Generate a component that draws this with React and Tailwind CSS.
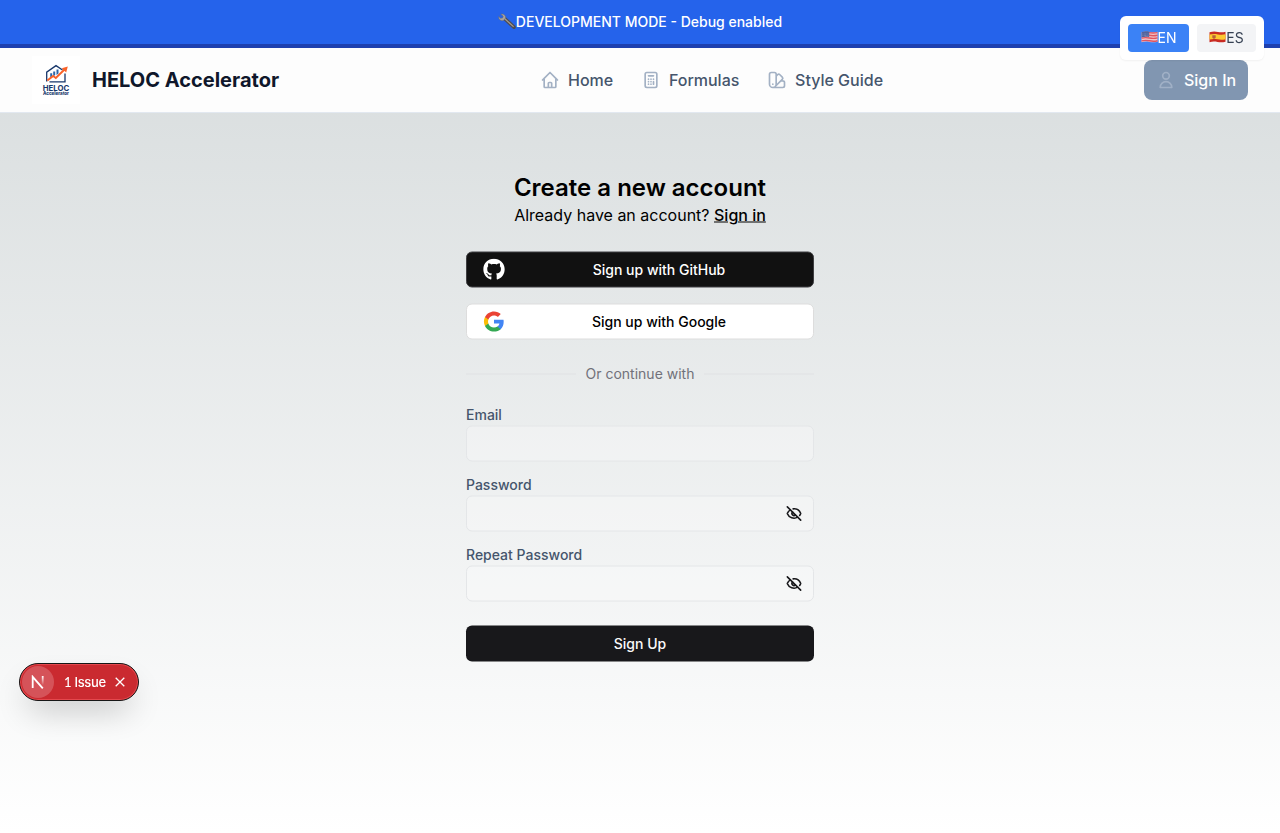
import { EyeOff } from "lucide-react";
import { HiOutlineHome, HiOutlineCalculator, HiOutlineColorSwatch, HiOutlineUser } from "react-icons/hi";
import { FaGithub } from "react-icons/fa";

function Wrench() {
  return (
    <svg viewBox="0 0 18 18" className="h-[18px] w-[18px] shrink-0">
      <path d="M6.5 5.5 16 14.2" stroke="#4e4d52" strokeWidth="3.6" strokeLinecap="round" />
      <path d="M6 5 15.2 13.4" stroke="#a59c94" strokeWidth="1.2" strokeLinecap="round" />
      <path d="M2.9 1.2 5.2 3.2 4.6 5 2.6 5.3.7 3.5C.4 6.5 2.8 8.3 5.3 7.4L7.6 5.2C8 2.5 5.6.5 2.9 1.2Z" fill="#a9a49f" stroke="#69686d" strokeWidth=".5" />
    </svg>
  );
}

function UsFlag() {
  return (
    <svg viewBox="0 0 17 12" className="mb-0.5 h-3 w-[17px] shrink-0">
      <path d="M.5 1.2C4 .2 6 .2 9 .9s5 .5 7.5-.2V10.7c-3 .8-5 .8-8 .2s-5-.6-8 .3Z" fill="#f3c6c9" />
      <path d="M8 1.6c3 .7 5.5.6 8.5 0M8 4.3c3 .6 5.5.6 8.5-.1M.5 7.1c3-.8 5-.7 8-.1s5 .6 8-.1M.5 9.9c3-.8 5-.8 8-.1s5 .7 8-.1" fill="none" stroke="#e05560" strokeWidth="1.4" />
      <path d="M.5 1.2C4 .2 5.5.2 8.2.7V6C5.5 5.6 4 5.6.5 6.4Z" fill="#51639c" />
      <path d="M1.5 3h6M1.5 4.6h6" stroke="#a9b6d8" strokeWidth=".5" strokeDasharray=".7 .7" />
    </svg>
  );
}

function EsFlag() {
  return (
    <svg viewBox="0 0 17 12" className="mb-0.5 h-3 w-[17px] shrink-0">
      <path d="M.5 1.2C4 .2 6 .2 9 .9s5 .5 7.5-.2V10.7c-3 .8-5 .8-8 .2s-5-.6-8 .3Z" fill="#c92b22" />
      <path d="M.5 3.6c3.5-.9 5.5-.8 8.5-.2s5 .5 7.5-.1V8.2c-3 .7-5 .7-8 .1s-5-.6-8 .3Z" fill="#fcc931" />
      <path d="M3.300 4.200h3.400v2.600L5 8 3.300 6.800Z" fill="#b9603b" />
    </svg>
  );
}

function GoogleMark() {
  return (
    <svg viewBox="0 0 24 24" className="h-[22px] w-[22px]">
      <path fill="#4285F4" d="M22.560 12.250c0-.78-.07-1.530-.2-2.250H12v4.260h5.920c-.26 1.370-1.040 2.530-2.210 3.310v2.770h3.570c2.080-1.920 3.280-4.740 3.280-8.090z" />
      <path fill="#34A853" d="M12 23c2.970 0 5.460-.98 7.280-2.660l-3.570-2.770c-.98.66-2.230 1.060-3.710 1.060-2.860 0-5.290-1.930-6.160-4.530H2.180v2.840C3.990 20.530 7.700 23 12 23z" />
      <path fill="#FBBC05" d="M5.840 14.090c-.22-.66-.35-1.360-.35-2.090s.13-1.430.35-2.090V7.070H2.180C1.430 8.550 1 10.220 1 12s.43 3.450 1.180 4.930l3.660-2.840z" />
      <path fill="#EA4335" d="M12 5.380c1.620 0 3.060.56 4.210 1.640l3.150-3.150C17.450 2.090 14.970 1 12 1 7.700 1 3.990 3.470 2.180 7.070l3.660 2.840c.87-2.600 3.300-4.530 6.160-4.530z" />
    </svg>
  );
}

function Logo() {
  return (
    <svg viewBox="0 0 48 48" className="h-12 w-12 bg-white">
      <path d="M14.700 25.400V16.200L24 9.600l6.500 4.400M33 17.500v8.300H17.500" fill="none" stroke="#17376b" strokeWidth="1.300" />
      <path d="M18.200 17.200h2v3l-2 1.500ZM21.200 15.600h2v3.600l-2 .8ZM24.500 13.500h2v4l-2 1.500Z" fill="#2c66a8" />
      <path d="m15.300 24.500 5.900-4.500 2.600 1.900 8.700-8.400" fill="none" stroke="#fa6228" strokeWidth="1.900" />
      <path d="m29.800 12.300 6-1.800-1.600 6Z" fill="#fa6228" />
      <text x="10.700" y="34.800" textLength="26.500" lengthAdjust="spacingAndGlyphs" fontSize="7.600" fontWeight="700" fill="#17376b">HELOC</text>
      <text x="11" y="39.400" textLength="26" lengthAdjust="spacingAndGlyphs" fontSize="4.600" fontWeight="800" fill="#17376b">Accelerator</text>
    </svg>
  );
}

function NavItem({ icon: Icon, children }) {
  return (
    <a className="flex items-center gap-2 font-medium text-slate-600">
      <Icon className="h-5 w-5 text-[#a3b1c4]" />
      {children}
    </a>
  );
}

function Field({ label, password }) {
  return (
    <label className="flex flex-col">
      <span className="h-[22px] text-sm leading-[22px] font-medium text-slate-600">{label}</span>
      <span className="flex h-9 items-center justify-end rounded-md border border-[#e4e6e8] bg-white/25 pr-[11px]">
        {password && <EyeOff strokeWidth={2.4} className="h-4 w-4 text-[#18181b]" />}
      </span>
    </label>
  );
}

export default function App() {
  return (
    <div className="h-[833px] overflow-hidden bg-linear-to-b from-[#d6dbdc] to-white font-['Inter',sans-serif] text-base text-black">
      <div className="flex h-12 items-center justify-center border-b-4 border-[#1e40af] bg-[#2563eb] text-sm font-medium text-white">
        <Wrench />
        <span>DEVELOPMENT MODE - Debug enabled</span>
      </div>

      <header className="flex h-[65px] items-center border-b border-slate-200 bg-[#fdfdfd] px-8">
        <div className="flex w-[508px] items-center gap-3">
          <Logo />
          <span className="text-xl font-bold text-slate-900">HELOC Accelerator</span>
        </div>
        <nav className="flex flex-1 items-center gap-[27.7px]">
          <NavItem icon={HiOutlineHome}>Home</NavItem>
          <NavItem icon={HiOutlineCalculator}>Formulas</NavItem>
          <NavItem icon={HiOutlineColorSwatch}>Style Guide</NavItem>
        </nav>
        <button className="flex h-10 w-[104px] items-center gap-2 rounded-lg bg-[#8196b1] pl-3 font-medium text-white">
          <HiOutlineUser className="h-5 w-5 text-[#a0b0c6]" />
          Sign In
        </button>
      </header>

      <main className="mx-auto flex w-[348px] translate-y-[0.5px] flex-col pt-[58px]">
        <div className="text-center">
          <h1 className="text-2xl leading-8 font-semibold">Create a new account</h1>
          <p className="leading-[23px]">
            Already have an account? <a className="font-medium underline">Sign in</a>
          </p>
        </div>

        <div className="mt-[25px] flex flex-col gap-4 text-sm font-medium">
          <button className="flex h-9 items-center rounded-md border border-[#3f3f42] bg-[#111111] px-4 text-white">
            <FaGithub className="h-[22px] w-[22px]" />
            <span className="ml-4 flex-1 text-center">Sign up with GitHub</span>
          </button>
          <button className="flex h-9 items-center rounded-md border border-[#dddddd] bg-white px-4">
            <GoogleMark />
            <span className="ml-4 flex-1 text-center">Sign up with Google</span>
          </button>
        </div>

        <div className="mt-6 flex h-5 items-center gap-2.5 text-sm text-[#71717a]">
          <span className="h-px flex-1 bg-[#dfe1e4]" />
          <span>Or continue with</span>
          <span className="h-px flex-1 bg-[#dfe1e4]" />
        </div>

        <div className="mt-5 flex flex-col gap-3">
          <Field label="Email" />
          <Field label="Password" password />
          <Field label="Repeat Password" password />
        </div>
        <button className="mt-6 h-9 rounded-md bg-[#18181b] text-sm font-medium text-[#fafafa]">Sign Up</button>
      </main>

      <div className="fixed top-4 right-4 flex h-11 w-36 gap-2 rounded-md bg-white p-2 text-sm shadow-[0_1px_2px_rgba(0,0,0,0.05)]">
        <button className="flex w-[61px] items-center justify-center rounded bg-[#3b82f6] text-white">
          <UsFlag />
          EN
        </button>
        <button className="flex flex-1 items-center justify-center rounded bg-gray-100 text-gray-700">
          <EsFlag />
          ES
        </button>
      </div>

      <div className="fixed top-[663px] left-[19px] flex h-[38px] w-[120px] items-center rounded-full border border-[#171717] bg-[#ca2a30] pl-[2px] text-[13px] text-white shadow-[inset_0_0_0_1px_#e5484d,0_16px_32px_-8px_rgba(0,0,0,0.24)]">
        <span className="flex h-8 w-8 items-center justify-center rounded-full bg-[#d55359]">
          <svg viewBox="0 0 14 14" className="h-3.5 w-3.5" fill="none" strokeWidth="1.800">
            <defs>
              <linearGradient id="stem" x1="0" x2="0" y1="0" y2="1">
                <stop offset="0" stopColor="#fff" />
                <stop offset="1" stopColor="#fff" stopOpacity="0" />
              </linearGradient>
            </defs>
            <path d="M1.700 13V1.800L11.800 13.300" stroke="white" />
            <path d="M10.800 1h1.800v9h-1.800Z" fill="url(#stem)" />
          </svg>
        </span>
        <span className="ml-[10px] w-[42px] pt-px font-medium tracking-[-0.3px] whitespace-nowrap">
          <span className="font-['Lato',sans-serif]">1</span> Issue
        </span>
        <svg viewBox="0 0 10 10" className="ml-[9px] h-2.5 w-2.5" stroke="white" strokeWidth="1.300">
          <path d="m.7.700 8.600 8.600M9.300.700.700 9.300" />
        </svg>
      </div>
    </div>
  );
}
